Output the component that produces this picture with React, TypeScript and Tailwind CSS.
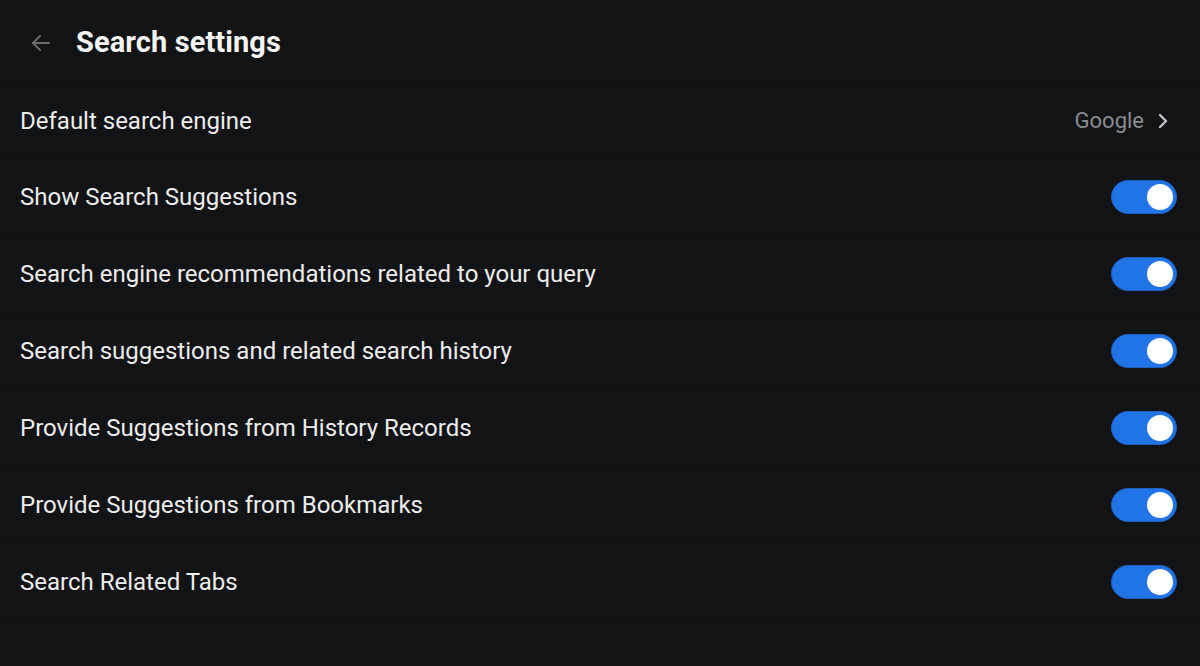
import React from "react";

const rows = [
  "Show Search Suggestions",
  "Search engine recommendations related to your query",
  "Search suggestions and related search history",
  "Provide Suggestions from History Records",
  "Provide Suggestions from Bookmarks",
  "Search Related Tabs",
];

function Toggle() {
  return (
    <div className="w-[66px] h-[34px] rounded-full bg-[#2174e6] border border-[#1b5fc0] flex items-center justify-end pr-[3px]">
      <div className="w-[26px] h-[26px] rounded-full bg-white" />
    </div>
  );
}

export default function App() {
  return (
    <div
      className="w-[1200px] h-[666px] bg-[#121315] text-white overflow-hidden"
      style={{ fontFamily: "Roboto, 'Noto Sans', sans-serif" }}
    >
      <div className="h-[83px] flex items-center pl-[29px] pt-[4px] border-b border-[#0e0f11]">
        <svg width="24" height="24" viewBox="0 0 24 24" fill="none" stroke="#6a6b6d" strokeWidth="2" strokeLinecap="round" strokeLinejoin="round">
          <path d="M20 12H4" />
          <path d="M11 5l-7 7 7 7" />
        </svg>
        <span className="ml-[23px] text-[29px] tracking-[0.1px] font-bold text-[#f4f4f4]">Search settings</span>
      </div>
      <div className="h-[76px] flex items-center justify-between pl-[20px] pr-[30px] border-b border-[#0e0f11] mx-0">
        <span className="text-[24px] text-[#ededed]">Default search engine</span>
        <div className="flex items-center gap-[12px]">
          <span className="text-[22px] text-[#8b8c8e]">Google</span>
          <svg width="14" height="16" viewBox="0 0 14 16" fill="none" stroke="#c4c5c7" strokeWidth="2.4" strokeLinecap="round" strokeLinejoin="round">
            <path d="M4 2l6 6-6 6" />
          </svg>
        </div>
      </div>
      {rows.map((r) => (
        <div key={r} className="h-[77px] flex items-center justify-between pl-[20px] pr-[23px] border-b border-[#0e0f11]">
          <span className="text-[24px] text-[#ededed]">{r}</span>
          <Toggle />
        </div>
      ))}
    </div>
  );
}
